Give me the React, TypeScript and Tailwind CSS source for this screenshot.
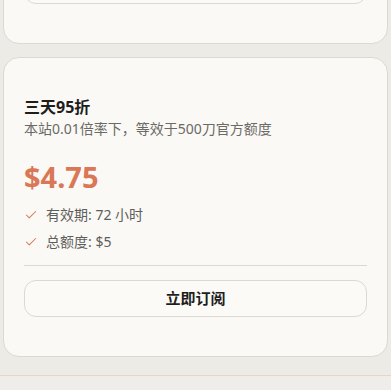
import { Check } from 'lucide-react';

const font = { fontFamily: '"Noto Sans", "Noto Sans CJK SC", sans-serif' };

export default function App() {
  return (
    <div className="h-[390px] bg-[#edebe6] overflow-hidden" style={font}>
      <div className="flex flex-col gap-[13px] px-[3px]">
        {/* previous plan card (cut off) */}
        <div className="mt-[-35px] flex flex-col rounded-2xl border border-[#dcd9d1] bg-[#faf9f5] px-5 pb-[39px]">
          <button className="block h-[38px] w-full rounded-xl border border-[#dcd9d1] bg-[#fbfaf7]" />
        </div>

        {/* plan card */}
        <div className="flex flex-col rounded-2xl border border-[#dcd9d1] bg-[#faf9f5] px-5 pt-[37px] pb-[39px]">
          <h3 className="text-[16px] leading-6 font-bold text-[#1f1e1c]">三天95折</h3>
          <p className="text-[14px] leading-5 text-[#6b6a66]">本站0.01倍率下，等效于500刀官方额度</p>

          <div className="mt-5 text-[29px] leading-9 font-bold text-[#d97757]">$4.75</div>

          <ul className="mt-[10px] flex flex-col gap-[7px]">
            <li className="flex items-center gap-2 text-[14px] leading-5 text-[#5f5e5a]">
              <Check className="w-[14px] h-[14px] text-[#d97757]" strokeWidth={1.75} />
              <span>有效期: 72 小时</span>
            </li>
            <li className="flex items-center gap-2 text-[14px] leading-5 text-[#5f5e5a]">
              <Check className="w-[14px] h-[14px] text-[#d97757]" strokeWidth={1.75} />
              <span>总额度: $5</span>
            </li>
          </ul>

          <div className="mt-[13px] h-px bg-[#dcd9d1]" />

          <button className="mt-[14px] flex h-[37px] w-full items-center justify-center rounded-xl border border-[#dcd9d1] bg-[#fbfaf7] text-[15px] font-semibold text-[#1f1e1c]">
            立即订阅
          </button>
        </div>
      </div>

      <div className="mt-[18px] h-10 border-t border-[#eed3c2] bg-[#efede9]" />
    </div>
  );
}
